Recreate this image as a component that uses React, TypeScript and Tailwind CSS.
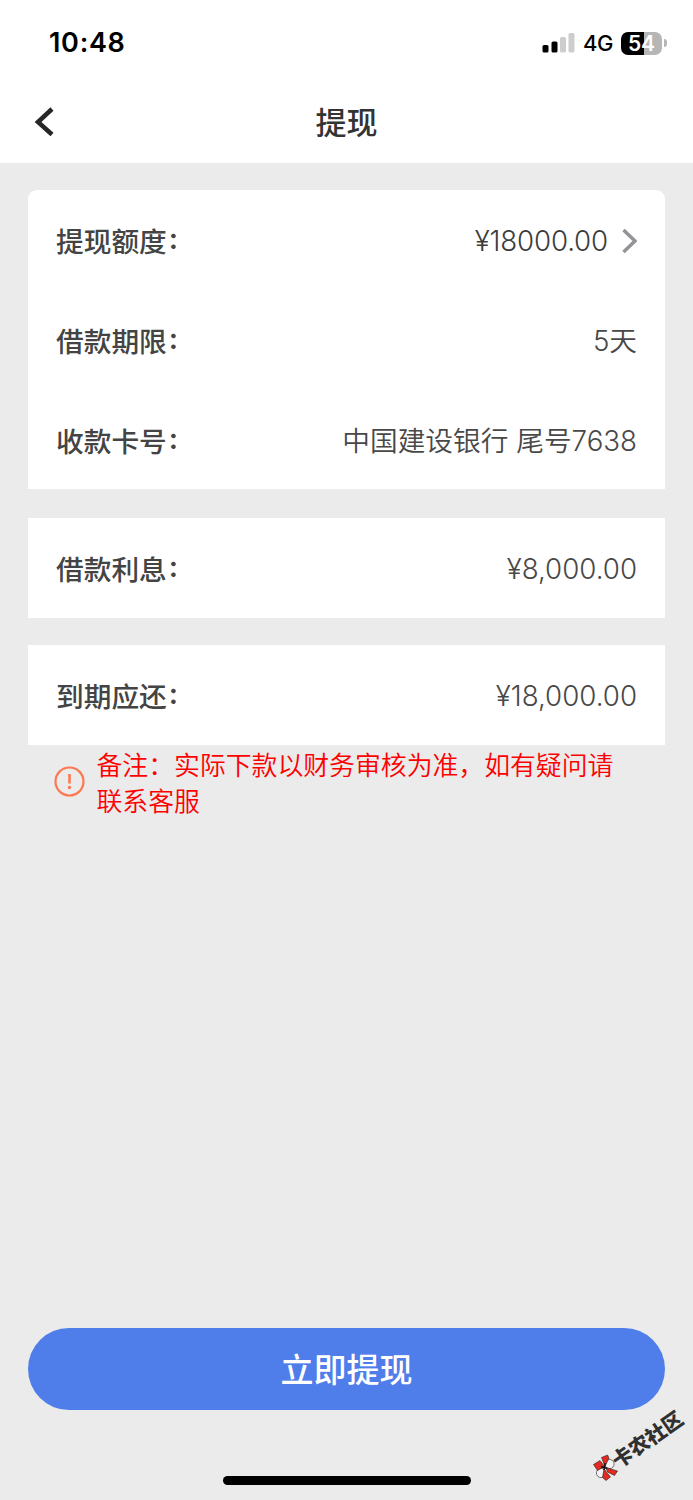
import { ReactNode } from "react";

function Row({ label, children }: { label: string; children: ReactNode }) {
  return (
    <div className="flex h-[99.8px] items-center justify-between px-7 pt-1 text-[27.7px]">
      <span className="font-medium text-[#444]">
        {label}
        <span className="ml-[2px] inline-block -translate-y-[3px] text-[29px] font-semibold">:</span>
      </span>
      <div className="flex items-center font-[350] text-[#484848]">{children}</div>
    </div>
  );
}

function StatusBar() {
  return (
    <div className="flex h-[86px] items-center justify-between pl-[49px] pr-[26px] text-black">
      <span className="pt-px font-['Inter'] text-[27px] font-semibold tracking-[0.7px]">10:48</span>
      <div className="flex items-center">
        <svg width="33" height="21" viewBox="0 0 33 21">
          <rect x="0.5" y="12" width="6" height="7.5" rx="1.6" fill="#000" />
          <rect x="9.5" y="8.5" width="6" height="11" rx="1.6" fill="#000" />
          <rect x="18" y="4" width="6" height="15.5" rx="1.6" fill="#cdcdcd" />
          <rect x="26.5" y="0" width="6" height="19.5" rx="1.6" fill="#cdcdcd" />
        </svg>
        <span className="ml-2 w-[38px] font-['Inter'] text-[22px] font-medium tracking-[-0.5px]">4G</span>
        <div className="flex h-[23px] w-[41px] items-center justify-center rounded-[7px] bg-[linear-gradient(90deg,#000_55%,#b6b6b6_55%)] pt-px font-['Inter'] text-[21px] font-semibold text-white">
          54
        </div>
        <div className="ml-[2px] h-2 w-[3px] rounded-r-full bg-[#b6b6b6]" />
      </div>
    </div>
  );
}

function Watermark() {
  return (
    <div className="absolute bottom-0 right-0 h-[110px] w-[113px]">
      <svg width="113" height="110" viewBox="0 0 113 110">
        <g stroke="#222" strokeWidth="0.6">
          <circle cx="29.5" cy="74" r="4.6" fill="#f4f4f4" />
          <circle cx="21" cy="83" r="4.6" fill="#f4f4f4" />
          <path d="M13.5 74.5L20 70.5L24.5 76.5L17.500 80.5Z" fill="#e12b20" />
          <path d="M21.5 67.5L27.5 65L29 68L25 76.5Z" fill="#e12b20" />
          <path d="M26 77.5L37.5 81L34.5 85.5L27.500 82Z" fill="#e12b20" />
          <path d="M24 79L30.5 87L26 90.5L22.5 87.500Z" fill="#e12b20" />
          <path d="M21 76.5l6 2M25 73l-1 7" stroke="#111" strokeWidth="1.4" />
        </g>
        <text
          x="0"
          y="0"
          transform="translate(38.5 79) rotate(-35)"
          fill="#303030"
          fontSize="20.3"
          fontWeight="900"
          fontFamily="'Noto Sans CJK SC', sans-serif"
        >
          卡农社区
        </text>
      </svg>
    </div>
  );
}

export default function App() {
  return (
    <main className="relative flex h-[1500px] w-[693px] flex-col overflow-hidden bg-[#ebebeb] font-['Inter','Noto_Sans_CJK_SC',sans-serif]">
      <header className="h-[162.5px] shrink-0 bg-white">
        <StatusBar />
        <div className="grid h-[72px] grid-cols-[1fr_auto_1fr] items-center">
          <svg className="ml-[34px]" width="22" height="32" viewBox="0 0 22 32" fill="none">
            <path d="M18 3L4 16L18 28.5" stroke="#262626" strokeWidth="4.5" />
          </svg>
          <h1 className="text-[31px] font-medium leading-none text-[#333]">提现</h1>
        </div>
      </header>

      <section className="mx-7 mt-[27.5px] rounded-t-[9px] bg-white">
        <Row label="提现额度">
          <span className="tracking-[-0.15px] text-[#3c3c3c]">¥18000.00</span>
          <svg className="ml-[14px] -translate-y-px" width="15" height="26" viewBox="0 0 15 26" fill="none">
            <path d="M1.5 2L13 13L1.5 24" stroke="#929297" strokeWidth="3.5" />
          </svg>
        </Row>
        <Row label="借款期限">5天</Row>
        <Row label="收款卡号">中国建设银行 尾号7638</Row>
      </section>
      <section className="mx-7 mt-[28.5px] bg-white">
        <Row label="借款利息">¥8,000.00</Row>
      </section>
      <section className="mx-7 mt-[27.5px] bg-white">
        <Row label="到期应还">¥18,000.00</Row>
      </section>

      <div className="ml-[54px] mt-px flex items-center">
        <svg width="31" height="31" viewBox="0 0 31 31" fill="none">
          <circle cx="15.5" cy="15.5" r="14" stroke="#fc7850" strokeWidth="2.2" />
          <path d="M15.5 8v9.5" stroke="#fc7850" strokeWidth="2.6" />
          <circle cx="15.5" cy="21.5" r="1.7" fill="#fc7850" />
        </svg>
        <p className="ml-[11.5px] w-[530px] font-['Noto_Sans_CJK_SC',sans-serif] text-[25.85px] font-[350] leading-9 text-[#fe0000]">
          备注：实际下款以财务审核为准，如有疑问请
          <br />
          联系客服
        </p>
      </div>

      <button className="mx-7 mb-[90.5px] mt-auto h-[81.5px] shrink-0 rounded-full bg-[#4f7dea] pt-[3px] text-[33px] font-medium text-white">
        立即提现
      </button>
      <div className="absolute bottom-[15px] left-[223px] h-[9px] w-[248px] rounded-full bg-black" />
      <Watermark />
    </main>
  );
}
